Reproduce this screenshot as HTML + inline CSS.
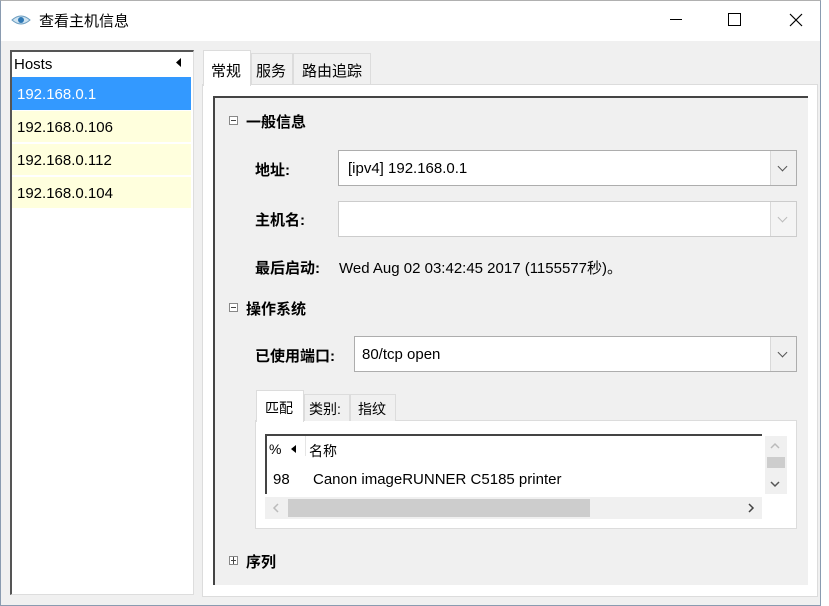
<!DOCTYPE html>
<html><head><meta charset="utf-8"><style>
*{margin:0;padding:0;box-sizing:border-box}
body{width:829px;height:606px;background:#fff;font-family:"Liberation Sans","Noto Sans CJK SC",sans-serif;font-size:14px;color:#000;position:relative;overflow:hidden}
.a{position:absolute}
.b{font-weight:bold}
.combo{position:absolute;background:#fff;border:1px solid #adadad}
.combo .arr{position:absolute;right:0;top:0;bottom:0;width:26px;border-left:1px solid #d9d9d9;background:#f0f0f0}
.chev{position:absolute;left:8px;top:12px;width:7px;height:7px;border-right:1.2px solid #555;border-bottom:1.2px solid #555;transform:rotate(45deg)}
.box{position:absolute;width:9px;height:9px;border:1px solid #888;background:#fff}
.box:after{content:"";position:absolute;left:1px;top:3px;width:5px;height:1px;background:#444}
</style></head><body>
<div class="a" style="left:0;top:0;width:821px;height:606px;background:#f0f0f0;border:1px solid #8a9bb0;border-top:1px solid #b0b0b0"></div>
<div class="a" style="left:1px;top:1px;width:819px;height:40px;background:#fff"></div>
<svg class="a" style="left:11px;top:13px" width="20" height="14" viewBox="0 0 20 14"><path d="M1 7 Q10 -1 19 7 Q10 15 1 7Z" fill="#cfe3f0" stroke="#6a9cc0" stroke-width="1"/><circle cx="10" cy="7" r="3" fill="#2e78b5"/></svg>
<div class="a" style="left:39px;top:10px;font-size:15px">查看主机信息</div>
<div class="a" style="left:670px;top:19px;width:12px;height:1px;background:#000"></div>
<div class="a" style="left:728px;top:13px;width:13px;height:13px;border:1px solid #000"></div>
<svg class="a" style="left:789px;top:13px" width="14" height="14"><path d="M1 1L13 13M13 1L1 13" stroke="#000" stroke-width="1.2"/></svg>
<div class="a" style="left:10px;top:50px;width:184px;height:545px;background:#fff;border-left:2px solid #555;border-top:2px solid #555;border-right:1px solid #ddd;border-bottom:1px solid #ddd"></div>
<div class="a" style="left:14px;top:56px;font-size:15px">Hosts</div>
<svg class="a" style="left:176px;top:58px" width="6" height="9"><path d="M5 0L0 4.5L5 9Z" fill="#000"/></svg>
<div class="a" style="left:12px;top:77px;width:179px;height:33px;background:#3399ff;color:#fff;padding:9px 0 0 5px;font-size:15px">192.168.0.1</div>
<div class="a" style="left:12px;top:111px;width:179px;height:31px;background:#ffffdd;padding:8px 0 0 5px;font-size:15px">192.168.0.106</div>
<div class="a" style="left:12px;top:144px;width:179px;height:31px;background:#ffffdd;padding:8px 0 0 5px;font-size:15px">192.168.0.112</div>
<div class="a" style="left:12px;top:177px;width:179px;height:31px;background:#ffffdd;padding:8px 0 0 5px;font-size:15px">192.168.0.104</div>
<div class="a" style="left:202px;top:84px;width:616px;height:513px;background:#fff;border:1px solid #dcdcdc"></div>
<div class="a" style="left:203px;top:50px;width:48px;height:36px;background:#fff;border:1px solid #dcdcdc;border-bottom:none;padding:9px 0 0 7px;font-size:15px">常规</div>
<div class="a" style="left:251px;top:53px;width:42px;height:31px;background:#f0f0f0;border:1px solid #dcdcdc;border-bottom:none;padding:6px 0 0 4px;font-size:15px">服务</div>
<div class="a" style="left:293px;top:53px;width:78px;height:31px;background:#f0f0f0;border:1px solid #dcdcdc;border-bottom:none;padding:6px 0 0 8px;font-size:15px">路由追踪</div>
<div class="a" style="left:213px;top:96px;width:595px;height:489px;background:#f0f0f0;border-left:2px solid #444;border-top:2px solid #444"></div>
<div class="box" style="left:229px;top:116px"></div>
<div class="a b" style="left:246px;top:111px;font-size:15px">一般信息</div>
<div class="a b" style="left:255px;top:159px;font-size:15px">地址:</div>
<div class="combo" style="left:338px;top:150px;width:459px;height:36px"><div class="a" style="left:9px;top:9px;font-size:15px">[ipv4] 192.168.0.1</div><div class="arr"><div class="chev"></div></div></div>
<div class="a b" style="left:255px;top:209px;font-size:15px">主机名:</div>
<div class="combo" style="left:338px;top:201px;width:459px;height:36px;border-color:#ccc"><div class="arr" style="background:#f4f4f4"><div class="chev" style="border-color:#bbb"></div></div></div>
<div class="a b" style="left:255px;top:257px;font-size:15px">最后启动:</div>
<div class="a" style="left:339px;top:257px;font-size:15px">Wed Aug 02 03:42:45 2017 (1155577秒)。</div>
<div class="box" style="left:229px;top:303px"></div>
<div class="a b" style="left:246px;top:298px;font-size:15px">操作系统</div>
<div class="a b" style="left:255px;top:345px;font-size:15px">已使用端口:</div>
<div class="combo" style="left:354px;top:336px;width:443px;height:36px"><div class="a" style="left:7px;top:9px;font-size:15px">80/tcp open</div><div class="arr"><div class="chev"></div></div></div>
<div class="a" style="left:255px;top:420px;width:542px;height:109px;background:#fff;border:1px solid #dcdcdc"></div>
<div class="a" style="left:256px;top:390px;width:48px;height:32px;background:#fff;border:1px solid #dcdcdc;border-bottom:none;padding:7px 0 0 8px;font-size:14px">匹配</div>
<div class="a" style="left:304px;top:394px;width:46px;height:27px;background:#f0f0f0;border:1px solid #dcdcdc;border-bottom:none;padding:4px 0 0 4px;font-size:14px">类别:</div>
<div class="a" style="left:350px;top:394px;width:46px;height:27px;background:#f0f0f0;border:1px solid #dcdcdc;border-bottom:none;padding:4px 0 0 7px;font-size:14px">指纹</div>
<div class="a" style="left:265px;top:434px;width:497px;height:60px;background:#fff;border-left:2px solid #444;border-top:2px solid #444"></div>
<div class="a" style="left:269px;top:441px;font-size:14px">%</div>
<svg class="a" style="left:291px;top:445px" width="5" height="8"><path d="M5 0L0 4L5 8Z" fill="#000"/></svg>
<div class="a" style="left:305px;top:436px;width:1px;height:20px;background:#e5e5e5"></div>
<div class="a" style="left:309px;top:441px;font-size:14px">名称</div>
<div class="a" style="left:273px;top:471px;font-size:15px">98</div>
<div class="a" style="left:313px;top:471px;font-size:15px">Canon imageRUNNER C5185 printer</div>
<div class="a" style="left:765px;top:436px;width:22px;height:58px;background:#f0f0f0"></div>
<div class="a" style="left:767px;top:457px;width:18px;height:11px;background:#cdcdcd"></div>
<svg class="a" style="left:770px;top:442px" width="10" height="7"><path d="M1 6L5 2L9 6" fill="none" stroke="#bbb" stroke-width="1.5"/></svg>
<svg class="a" style="left:770px;top:481px" width="10" height="7"><path d="M1 1L5 5L9 1" fill="none" stroke="#555" stroke-width="1.5"/></svg>
<div class="a" style="left:265px;top:497px;width:497px;height:22px;background:#f0f0f0"></div>
<div class="a" style="left:288px;top:499px;width:302px;height:18px;background:#cdcdcd"></div>
<svg class="a" style="left:272px;top:503px" width="7" height="10"><path d="M6 1L2 5L6 9" fill="none" stroke="#bbb" stroke-width="1.5"/></svg>
<svg class="a" style="left:748px;top:503px" width="7" height="10"><path d="M1 1L5 5L1 9" fill="none" stroke="#444" stroke-width="1.5"/></svg>
<div class="box" style="left:229px;top:556px"></div>
<div class="a" style="left:233px;top:557px;width:1px;height:7px;background:#444"></div>
<div class="a b" style="left:246px;top:551px;font-size:15px">序列</div>
</body></html>
